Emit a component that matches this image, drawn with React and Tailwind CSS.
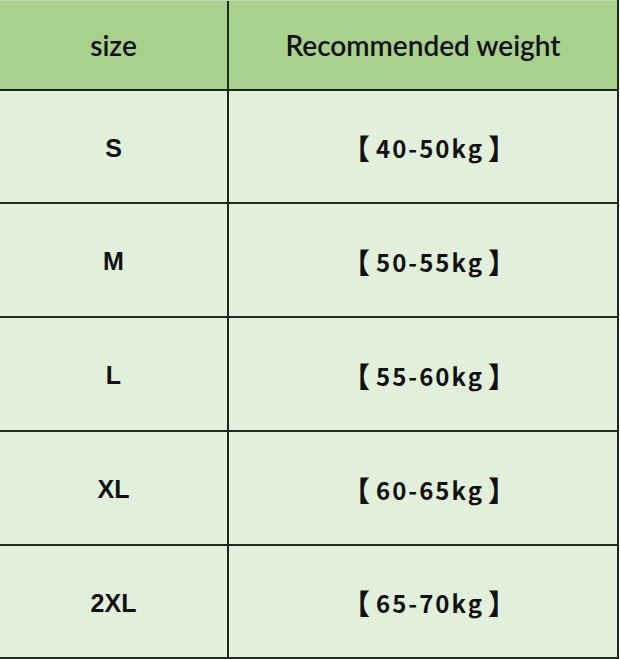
import React from 'react';

const rows = [
  { size: 'S', weight: '40-50kg', h: 'h-[113px]' },
  { size: 'M', weight: '50-55kg', h: 'h-[114px]' },
  { size: 'L', weight: '55-60kg', h: 'h-[114px]' },
  { size: 'XL', weight: '60-65kg', h: 'h-[114px]' },
  { size: '2XL', weight: '65-70kg', h: 'h-[113px]' },
];

const cjk = { fontFamily: '"Noto Sans CJK SC", "Noto Sans", sans-serif' };
const head = { fontFamily: 'Lato, "Noto Sans", sans-serif' };

export default function App() {
  return (
    <div className="w-[620px] h-[659px] bg-white">
      <div className="w-[619px] flex flex-col border-r-2 border-[#1f2a1f]">
        <div className="flex h-[91px] bg-[#a9d18e] border-b-2 border-[#1f2a1f] border-t border-t-[#c4dcb2]">
          <div
            className="w-[229px] border-r-2 border-[#1f2a1f] flex items-center justify-center text-[28px] font-semibold text-[#111]"
            style={head}
          >
            size
          </div>
          <div
            className="flex-1 flex items-center justify-center text-[28px] font-semibold text-[#111]"
            style={head}
          >
            Recommended weight
          </div>
        </div>
        {rows.map((r) => (
          <div key={r.size} className={`flex ${r.h} bg-[#e2efda] border-b-2 border-[#1f2a1f]`}>
            <div
              className="w-[229px] border-r-2 border-[#1f2a1f] pt-[4px] flex items-center justify-center text-[25px] font-bold text-[#111]"
              style={{ fontFamily: '"Liberation Sans", Arial, sans-serif' }}
            >
              {r.size}
            </div>
            <div
              className="flex-1 flex items-center justify-center pt-[3px] pl-[12px] text-[24px] font-bold text-[#111]"
              style={cjk}
            >
              <span className="text-[28px] font-black leading-none">【</span>
              <span className="tracking-[2px] ml-[6px] mr-[4px]">{r.weight}</span>
              <span className="text-[28px] font-black leading-none">】</span>
            </div>
          </div>
        ))}
      </div>
    </div>
  );
}
